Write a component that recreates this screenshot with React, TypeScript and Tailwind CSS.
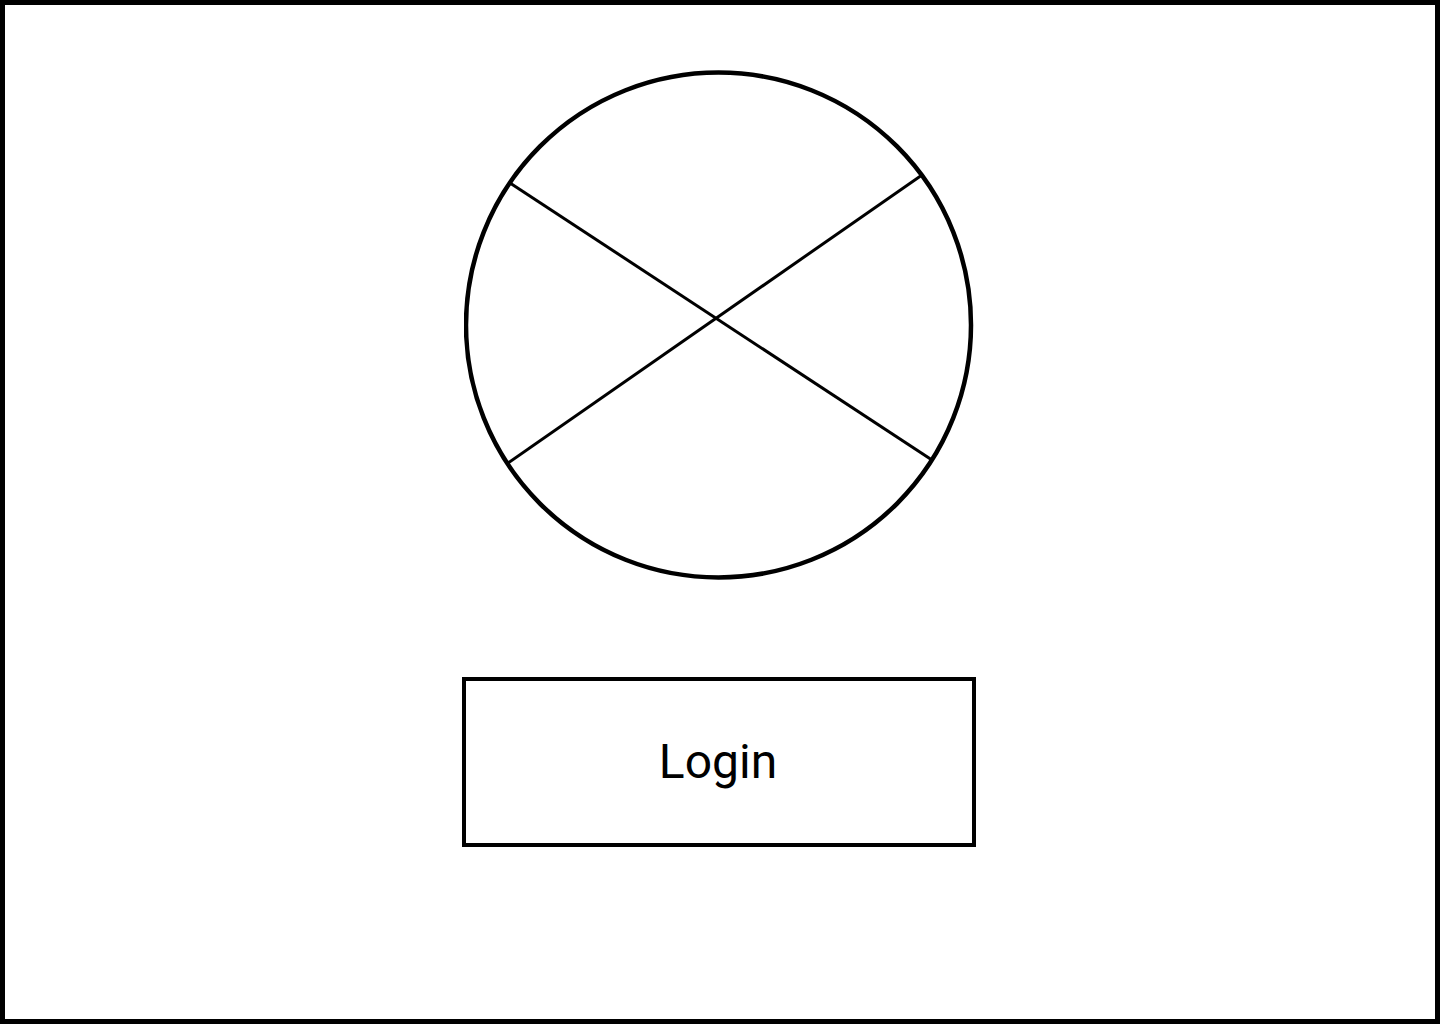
export default function App() {
  return (
    <div
      className="w-full h-[1024px] border-[5px] border-black bg-white flex flex-col items-center"
      style={{ fontFamily: "Roboto, 'Noto Sans', sans-serif" }}
    >
      <Placeholder />
      <button className="mt-[96px] mr-[2px] w-[514px] h-[170px] border-4 border-black bg-white flex items-center justify-center pr-[2px] text-[48px] text-black">
        Login
      </button>
    </div>
  );
}

function Placeholder() {
  return (
    <svg
      className="mt-[64px] shrink-0"
      width="512"
      height="512"
      viewBox="0 0 512 512"
      fill="none"
      stroke="black"
    >
      <circle cx="254.5" cy="256" r="252.5" strokeWidth="4.5" />
      <line x1="46" y1="114" x2="468" y2="391" strokeWidth="3" />
      <line x1="44" y1="394" x2="458" y2="106" strokeWidth="3" />
    </svg>
  );
}
